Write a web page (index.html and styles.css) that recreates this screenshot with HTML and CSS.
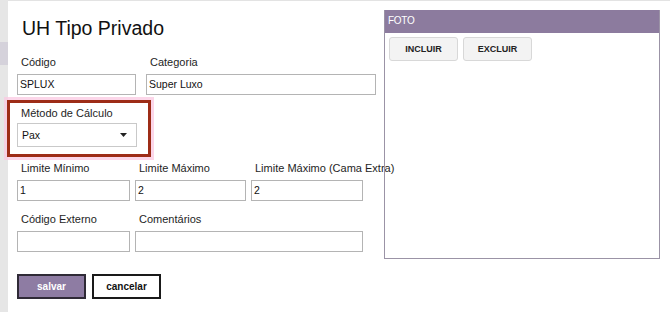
FILE: index.html
```html
<!DOCTYPE html>
<html lang="pt">
<head>
<meta charset="utf-8">
<title>UH Tipo Privado</title>
<link rel="stylesheet" href="styles.css">
</head>
<body>
<div class="app">
  <aside class="rail"><div class="rail-mark"></div></aside>
  <main class="page">
    <div class="form">
      <h1 class="title">UH Tipo Privado</h1>
      <div class="row row1">
        <div class="field w119"><label>Código</label><div class="input">SPLUX</div></div>
        <div class="field w230"><label>Categoria</label><div class="input">Super Luxo</div></div>
      </div>
      <div class="highlight">
        <div class="field w120"><label>Método de Cálculo</label>
          <div class="select"><span>Pax</span>
            <svg class="caret" width="7" height="4" viewBox="0 0 7 4"><path d="M0 0H7L3.5 4Z" fill="#222"/></svg>
          </div>
        </div>
      </div>
      <div class="row row3">
        <div class="field w113"><label>Limite Mínimo</label><div class="input">1</div></div>
        <div class="field w111"><label>Limite Máximo</label><div class="input">2</div></div>
        <div class="field w112"><label>Limite Máximo (Cama Extra)</label><div class="input">2</div></div>
      </div>
      <div class="row row4">
        <div class="field w113"><label>Código Externo</label><div class="input"></div></div>
        <div class="field w228"><label>Comentários</label><div class="input"></div></div>
      </div>
      <div class="actions">
        <button class="btn btn-save">salvar</button>
        <button class="btn btn-cancel">cancelar</button>
      </div>
    </div>
    <section class="foto">
      <header class="foto-head">FOTO</header>
      <div class="foto-tools">
        <button class="tool">INCLUIR</button>
        <button class="tool">EXCLUIR</button>
      </div>
    </section>
  </main>
</div>
</body>
</html>
```
FILE: styles.css
```css
* { box-sizing: border-box; }
html, body { margin: 0; padding: 0; }
body {
  font-family: "Liberation Sans", Arial, sans-serif;
  background: #fff;
  color: #222;
  width: 670px;
  height: 312px;
  overflow: hidden;
}
.app { display: flex; height: 312px; }
.rail { width: 8px; flex: 0 0 8px; background: #e6e6e6; padding-top: 42px; }
.rail-mark { height: 23px; background: #d5d2db; }
.page { flex: 1; display: flex; border-top: 1px solid #e3e3e3; }
.form { flex: 0 0 376px; min-width: 0; padding-left: 9px; }
.title {
  margin: 13px 0 0 5px;
  font-size: 19.5px;
  line-height: 28px;
  font-weight: 400;
  color: #111;
}
.row { display: flex; }
.row1 { margin-top: 12px; gap: 10px; }
.row3 { gap: 5px; }
.row4 { margin-top: 10px; gap: 5px; }
.field { display: flex; flex-direction: column; flex: none; }
.field label {
  font-size: 11px;
  line-height: 16px;
  padding-left: 4px;
  margin-bottom: 4px;
  white-space: nowrap;
  color: #1e1e1e;
}
.input {
  height: 21px;
  width: 100%;
  border: 1px solid #b4b4b4;
  padding: 0 2px;
  font-size: 10.5px;
  line-height: 19px;
  color: #111;
  background: #fff;
}
.w111 { width: 111px; }
.w112 { width: 112px; }
.w113 { width: 113px; }
.w119 { width: 119px; }
.w120 { width: 120px; }
.w228 { width: 228px; }
.w230 { width: 230px; }
.highlight {
  margin: 5px 0 3px -10px;
  width: 144px;
  border: 3px solid #9d2c17;
  padding: 2px 11px 7px 7px;
  box-shadow: 0 0 0 3px rgba(251, 200, 225, 0.75);
}
.highlight .field label { margin-bottom: 2px; }
.select {
  height: 24px;
  width: 100%;
  border: 1px solid #c9c9c9;
  display: flex;
  align-items: center;
  justify-content: space-between;
  padding: 0 9px 0 4px;
  font-size: 10.5px;
  color: #111;
}
.caret { display: block; }
.actions { display: flex; gap: 6px; margin-top: 22px; }
.btn {
  width: 69px;
  height: 25px;
  font-family: "Liberation Sans", Arial, sans-serif;
  font-size: 10px;
  font-weight: 700;
  padding: 0;
  cursor: pointer;
}
.btn-save { background: #8e7ca3; color: #fff; border: 2px solid #2f2a36; }
.btn-cancel { background: #fff; color: #111; border: 2px solid #1a1a1a; }
.foto {
  flex: none;
  width: 276px;
  height: 249px;
  margin-top: 9px;
  border: 1px solid #9b93a6;
  border-top: 0;
}
.foto-head {
  height: 23px;
  background: #8c7b9e;
  color: #fff;
  font-size: 10px;
  line-height: 22px;
  padding-left: 3px;
  letter-spacing: -0.3px;
}
.foto-tools { display: flex; gap: 5px; padding: 4px 0 0 4px; }
.tool {
  width: 69px;
  height: 24px;
  background: #f3f3f3;
  border: 1px solid #d8d8d8;
  border-radius: 3px;
  font-family: "Liberation Sans", Arial, sans-serif;
  font-size: 9px;
  font-weight: 700;
  color: #222;
  padding: 0;
}
```
